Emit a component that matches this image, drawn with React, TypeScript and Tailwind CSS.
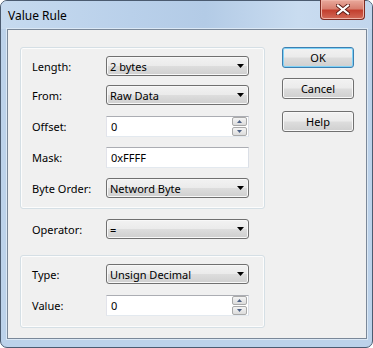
import React from 'react';

const font = "font-['Noto_Sans','Segoe_UI',sans-serif] text-[11px] text-black";

function Combo({ value }: { value: string }) {
  return (
    <div className="flex h-[20px] w-[143px] items-center justify-between rounded-[3px] border border-[#707070] bg-[linear-gradient(#f2f2f2_0%,#ebebeb_48%,#dddddd_52%,#cfcfcf_100%)] pl-[3px] pr-[4px] shadow-[inset_0_0_0_1px_#f8f8f8]">
      <span className="leading-none">{value}</span>
      <svg width="7" height="4" viewBox="0 0 7 4" aria-hidden="true">
        <path d="M0 0h7L3.5 4z" fill="#000" />
      </svg>
    </div>
  );
}

function SpinBtn({ up }: { up?: boolean }) {
  return (
    <div className="flex h-[9px] w-[15px] items-center justify-center rounded-[2px] border border-[#a9a9a9] bg-[linear-gradient(#f4f4f4,#dcdcdc)]">
      <svg width="5" height="3" viewBox="0 0 5 3" aria-hidden="true">
        <path d={up ? 'M0 3h5L2.5 0z' : 'M0 0h5L2.5 3z'} fill="#4d6185" />
      </svg>
    </div>
  );
}

function Edit({ value, spin }: { value: string; spin?: boolean }) {
  return (
    <div className="flex h-[21px] w-[143px] items-center justify-between border border-[#abadb3] border-b-[#e3e9ef] border-l-[#e2e3ea] border-r-[#dbdfe6] bg-white pl-[4px] pr-[1px]">
      <span className="leading-none">{value}</span>
      {spin && (
        <div className="flex flex-col gap-[1px]">
          <SpinBtn up />
          <SpinBtn />
        </div>
      )}
    </div>
  );
}

function Row({ label, children, className = '' }: { label: string; children: React.ReactNode; className?: string }) {
  return (
    <div className={`flex items-center ${className}`}>
      <span className="w-[74px] leading-none">{label}</span>
      {children}
    </div>
  );
}

function Btn({ label, def, className = '' }: { label: string; def?: boolean; className?: string }) {
  return (
    <div
      className={`flex h-[21px] w-[72px] items-center justify-center rounded-[3px] border bg-[linear-gradient(#f2f2f2_0%,#ebebeb_48%,#dddddd_52%,#cfcfcf_100%)] ${
        def ? 'border-[#3c7fb1] shadow-[inset_0_0_0_1px_#7fd2f7]' : 'border-[#707070] shadow-[inset_0_0_0_1px_#f8f8f8]'
      } ${className}`}
    >
      <span className="leading-none">{label}</span>
    </div>
  );
}

export default function App() {
  return (
    <div className={`${font} h-[348px] w-[373px] bg-white`}>
      <div className="relative flex h-[348px] w-[373px] flex-col rounded-[7px] border border-[#4b5b70] bg-[#bcd2ea]">
        {/* Title bar */}
        <div className="flex h-[28px] items-center rounded-t-[6px] bg-[linear-gradient(90deg,#c6daef_0%,#b9d0ea_35%,#b3cbe6_55%,#c9dcf0_80%,#c2d6ed_100%)] pl-[7px]">
          <span className="pt-[1px] text-[12px] leading-none text-black">Value Rule</span>
        </div>
        <div className="absolute right-[7px] top-[-1px] flex h-[20px] w-[45px] items-center justify-center rounded-b-[4px] border border-t-0 border-[#7e2b22] bg-[linear-gradient(#e9a99c_0%,#d88071_45%,#c3402f_55%,#d26a58_100%)] shadow-[inset_0_0_0_1px_#efb3a7]">
          <svg width="14" height="11" viewBox="0 0 14 11" aria-hidden="true">
            <path d="M2 1.5L12 9.5M12 1.5L2 9.5" stroke="#5a1a14" strokeWidth="4" strokeLinecap="square" />
            <path d="M2 1.5L12 9.5M12 1.5L2 9.5" stroke="#fff" strokeWidth="2.2" strokeLinecap="square" />
          </svg>
        </div>

        {/* Client area */}
        <div className="ml-[6px] mr-[5px] flex h-[310px] border border-[#7a8899] bg-[#f0f0f0] pl-[12px] pt-[17px] shadow-[0_0_0_1px_#dbe8f5]">
          <div className="flex w-[245px] flex-col">
            <div className="flex h-[162px] flex-col rounded-[3px] border border-[#d5dfe5] pl-[11px] pt-[8px] shadow-[inset_0_0_0_1px_#fcfcfc]">
              <Row label="Length:">
                <Combo value="2 bytes" />
              </Row>
              <Row label="From:" className="mt-[9px]">
                <Combo value="Raw Data" />
              </Row>
              <Row label="Offset:" className="mt-[11px]">
                <Edit value="0" spin />
              </Row>
              <Row label="Mask:" className="mt-[10px]">
                <Edit value="0xFFFF" />
              </Row>
              <Row label="Byte Order:" className="mt-[10px]">
                <Combo value="Netword Byte" />
              </Row>
            </div>

            <Row label="Operator:" className="mt-[10px] pl-[12px]">
              <Combo value="=" />
            </Row>

            <div className="mt-[16px] flex h-[73px] flex-col rounded-[3px] border border-[#d5dfe5] pl-[11px] pt-[8px] shadow-[inset_0_0_0_1px_#fcfcfc]">
              <Row label="Type:">
                <Combo value="Unsign Decimal" />
              </Row>
              <Row label="Value:" className="mt-[11px]">
                <Edit value="0" spin />
              </Row>
            </div>
          </div>

          <div className="ml-[17px] flex flex-col">
            <Btn label="OK" def />
            <Btn label="Cancel" className="mt-[10px]" />
            <Btn label="Help" className="mt-[12px]" />
          </div>
        </div>
      </div>
    </div>
  );
}
